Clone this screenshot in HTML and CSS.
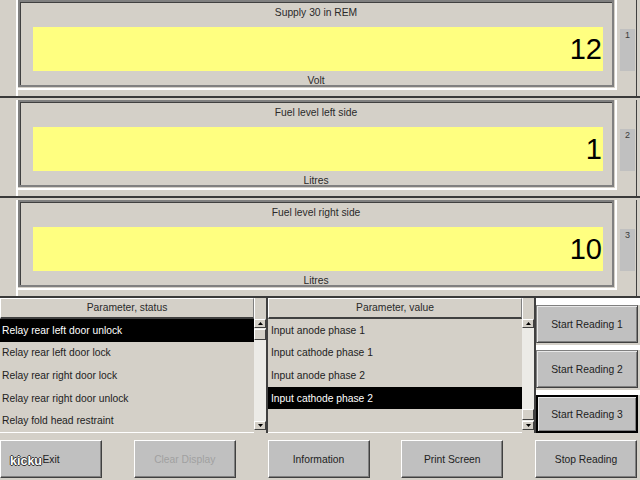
FILE: index.html
```html
<!DOCTYPE html>
<html>
<head>
<meta charset="utf-8">
<title>Readings</title>
<link rel="stylesheet" href="styles.css">
</head>
<body>
<main class="screen">
  <section class="readings">
    <div class="row">
      <div class="col"><div class="panel"><div class="frame">
        <div class="title">Supply 30 in REM</div>
        <div class="value">12</div>
        <div class="unit">Volt</div>
      </div></div></div>
      <div class="tab">1</div>
      <div class="vline"></div>
    </div>
    <div class="row">
      <div class="col"><div class="panel"><div class="frame">
        <div class="title">Fuel level left side</div>
        <div class="value">1</div>
        <div class="unit">Litres</div>
      </div></div></div>
      <div class="tab">2</div>
      <div class="vline"></div>
    </div>
    <div class="row">
      <div class="col"><div class="panel"><div class="frame">
        <div class="title">Fuel level right side</div>
        <div class="value">10</div>
        <div class="unit">Litres</div>
      </div></div></div>
      <div class="tab">3</div>
      <div class="vline"></div>
    </div>
  </section>

  <section class="lists">
    <div class="list">
      <div class="list-main">
        <div class="list-head">Parameter, status</div>
        <div class="list-body">
          <div class="item sel">Relay rear left door unlock</div>
          <div class="item">Relay rear left door lock</div>
          <div class="item">Relay rear right door lock</div>
          <div class="item">Relay rear right door unlock</div>
          <div class="item">Relay fold head restraint</div>
        </div>
      </div>
      <div class="scroll">
        <div class="scroll-head"></div>
        <div class="scroll-bar">
          <div class="sb-btn"><svg width="5" height="3" viewBox="0 0 5 3"><polygon points="2.5,0 5,3 0,3" fill="#000"/></svg></div>
          <div class="sb-track"><div class="thumb"></div></div>
          <div class="sb-btn"><svg width="5" height="3" viewBox="0 0 5 3"><polygon points="0,0 5,0 2.5,3" fill="#000"/></svg></div>
        </div>
      </div>
    </div>
    <div class="divider"></div>
    <div class="list">
      <div class="list-main">
        <div class="list-head">Parameter, value</div>
        <div class="list-body values">
          <div class="item">Input anode phase 1</div>
          <div class="item">Input cathode phase 1</div>
          <div class="item">Input anode phase 2</div>
          <div class="item sel">Input cathode phase 2</div>
          <div class="item"></div>
        </div>
      </div>
      <div class="scroll">
        <div class="scroll-head"></div>
        <div class="scroll-bar">
          <div class="sb-btn"><svg width="5" height="3" viewBox="0 0 5 3"><polygon points="2.5,0 5,3 0,3" fill="#000"/></svg></div>
          <div class="sb-track"><div class="thumb end"></div></div>
          <div class="sb-btn"><svg width="5" height="3" viewBox="0 0 5 3"><polygon points="0,0 5,0 2.5,3" fill="#000"/></svg></div>
        </div>
      </div>
    </div>
    <div class="divider"></div>
    <div class="start-col">
      <div class="slot first"><button class="btn">Start Reading 1</button></div>
      <div class="slot"><button class="btn">Start Reading 2</button></div>
      <div class="slot"><button class="btn default">Start Reading 3</button></div>
    </div>
  </section>

  <footer class="actions">
    <button class="btn wide">Exit</button>
    <button class="btn wide disabled">Clear Display</button>
    <button class="btn wide">Information</button>
    <button class="btn wide">Print Screen</button>
    <button class="btn wide">Stop Reading</button>
  </footer>

  <div class="watermark">kicku</div>
</main>
</body>
</html>
```

FILE: styles.css
```css
* {
  box-sizing: border-box;
  margin: 0;
  padding: 0;
}

html, body {
  width: 640px;
  height: 480px;
  overflow: hidden;
}

body {
  background: #d4d0c8;
  font-family: "Liberation Sans", Arial, sans-serif;
  font-size: 10.3px;
  color: #1e1e1e;
}

.screen {
  position: relative;
  width: 640px;
  height: 480px;
}

/* ---------- reading rows ---------- */
.row {
  display: flex;
  height: 98px;
  padding-left: 16px;
  border-bottom: 2px solid #3a3a3a;
  margin-bottom: 2px;
}

.row:last-child {
  margin-bottom: 0;
}

.col {
  width: 601px;
  height: 96px;
  border-left: 2px solid #fff;
}

.panel {
  height: 90px;
  padding: 0 1px 1px 0;
  border-right: 2px solid #fff;
  border-bottom: 2px solid #fff;
}

.frame {
  height: 87px;
  display: flex;
  flex-direction: column;
  border: 2px solid #808080;
  box-shadow: inset 1px 1px 0 #404040;
}

.title,
.unit {
  text-align: center;
  line-height: 12px;
  color: #2a2a2a;
  white-space: nowrap;
}

.title {
  margin-top: 5px;
}

.value {
  margin: 8px 0 0 13px;
  width: 570px;
  height: 44px;
  padding-right: 1px;
  background: #ffff80;
  color: #000;
  text-align: right;
  font-size: 29px;
  line-height: 45px;
}

.unit {
  margin-top: 4px;
}

.tab {
  width: 15px;
  height: 42px;
  margin: 29px 0 0 3px;
  padding-top: 1px;
  background: #c0c0c0;
  color: #3a3a3a;
  font-size: 9px;
  line-height: 10px;
  text-align: center;
}

.vline {
  width: 1px;
  height: 96px;
  margin-left: 1px;
  background: #404040;
}

/* ---------- lists ---------- */
.lists {
  display: flex;
  height: 135px;
}

.list {
  display: flex;
  width: 266px;
}

.list-main {
  width: 254px;
  display: flex;
  flex-direction: column;
}

.list-head {
  height: 21px;
  border-style: solid;
  border-width: 1px 1px 2px 1px;
  border-color: #fff #808080 #404040 #fff;
  text-align: center;
  line-height: 18px;
  color: #2a2a2a;
}

.list-body {
  height: 114px;
  display: grid;
  grid-template-rows: repeat(5, 1fr);
  border-bottom: 1px solid #fff;
}

.item {
  display: flex;
  align-items: center;
  padding-left: 2px;
  white-space: nowrap;
  color: #222;
}

.values .item {
  padding-left: 3px;
}

.item.sel {
  background: #000;
  color: #fff;
}

.scroll {
  width: 12px;
  display: flex;
  flex-direction: column;
}

.scroll-head {
  height: 21px;
  border-left: 1px solid #fff;
}

.scroll-bar {
  flex: 1;
  display: flex;
  flex-direction: column;
  background: #ecebe7;
  border-bottom: 3px solid #d4d0c8;
}

.sb-btn {
  height: 9px;
  display: flex;
  align-items: center;
  justify-content: center;
  background: #d4d0c8;
  border: 1px solid;
  border-color: #fff #404040 #404040 #fff;
}

.sb-track {
  flex: 1;
  display: flex;
  flex-direction: column;
  padding: 1px 0;
}

.thumb {
  height: 11px;
  background: #d4d0c8;
  border: 1px solid;
  border-color: #fff #404040 #404040 #fff;
}

.thumb.end {
  margin-top: auto;
}

.divider {
  width: 2px;
  background: #404040;
}

/* ---------- buttons ---------- */
.start-col {
  width: 104px;
  display: flex;
  flex-direction: column;
}

.slot {
  margin-top: 2px;
  padding-right: 1px;
  border-top: 5px solid #fff;
}

.slot.first {
  margin-top: 0;
  border-top-width: 7px;
}

.btn {
  display: flex;
  align-items: center;
  justify-content: center;
  width: 102px;
  height: 38px;
  background: #c0c0c0;
  font: inherit;
  color: #222;
  border: 1px solid;
  border-color: #808080 #404040 #404040 #808080;
  box-shadow: inset 1px 1px 0 #e8e8e8, inset -1px -1px 0 #808080;
  white-space: nowrap;
}

.btn.default {
  border: 2px solid #000;
  box-shadow: inset 1px 1px 0 #e8e8e8, inset -1px -1px 0 #808080;
}

.actions {
  display: flex;
  justify-content: space-between;
  width: 637px;
  margin-top: 7px;
}

.btn.wide {
  border-color: #fff #404040 #404040 #fff;
  box-shadow: inset -1px -1px 0 #808080;
}

.btn.disabled {
  color: #a0a0a0;
}

.watermark {
  position: absolute;
  left: 10px;
  top: 454px;
  font-weight: bold;
  font-size: 12.5px;
  line-height: 14px;
  color: #fff;
  text-shadow: 1px 0 0 #333, -1px 0 0 #333, 0 1px 0 #333, 0 -1px 0 #333;
}
```
